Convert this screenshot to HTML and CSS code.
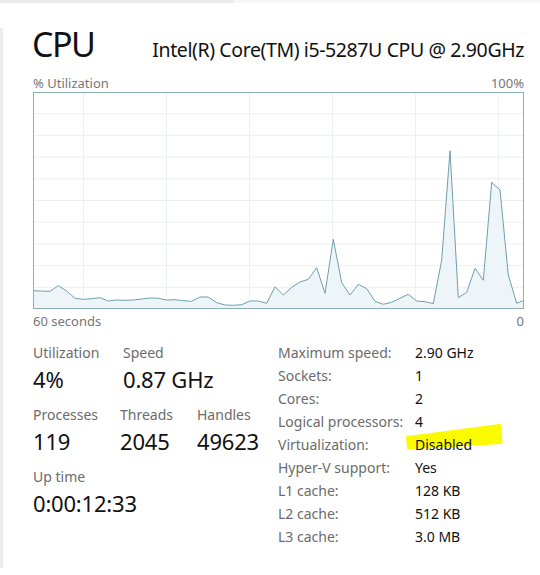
FILE: index.html
```html
<!DOCTYPE html>
<html lang="en">
<head>
    <meta charset="UTF-8">
    <title>CPU</title>
    <link rel="stylesheet" href="styles.css">
</head>
<body>
    <div class="topbar"></div>
    <div class="page">
        <header class="head">
            <h1 class="title">CPU</h1>
            <div class="model">Intel(R) Core(TM) i5-5287U CPU @ 2.90GHz</div>
        </header>

        <div class="axis">
            <span>% Utilization</span>
            <span>100%</span>
        </div>
        <div class="graph">
            <svg width="491" height="217" viewBox="33 92 491 217">
                <g class="grid">
                    <line x1="33" y1="113.7" x2="524" y2="113.7"/>
                    <line x1="33" y1="135.4" x2="524" y2="135.4"/>
                    <line x1="33" y1="157.1" x2="524" y2="157.1"/>
                    <line x1="33" y1="178.8" x2="524" y2="178.8"/>
                    <line x1="33" y1="200.5" x2="524" y2="200.5"/>
                    <line x1="33" y1="222.2" x2="524" y2="222.2"/>
                    <line x1="33" y1="243.9" x2="524" y2="243.9"/>
                    <line x1="33" y1="265.6" x2="524" y2="265.6"/>
                    <line x1="33" y1="287.3" x2="524" y2="287.3"/>
                    <line x1="83.5" y1="92" x2="83.5" y2="309"/>
                    <line x1="166.5" y1="92" x2="166.5" y2="309"/>
                    <line x1="249.5" y1="92" x2="249.5" y2="309"/>
                    <line x1="332.5" y1="92" x2="332.5" y2="309"/>
                    <line x1="415.5" y1="92" x2="415.5" y2="309"/>
                    <line x1="498.5" y1="92" x2="498.5" y2="309"/>
                </g>
                <polygon class="area" points="33.3,290.7 41.6,291 50,291.3 58.3,285.7 66.7,291 75,298.3 83.3,299.3 91.7,298.7 100,297.7 108.3,301 116.7,300 125,300.3 133.3,300 141.7,299 150,298 158.3,298.3 166.7,300 175,299.7 183.3,300.7 191.7,301.3 200,297 208.3,297 216.7,302.7 225,305 233.3,305.3 241.7,304.7 250,301 258.3,301 266.7,303.3 275,286.7 283.3,295 291.7,287.3 300,282 308.3,279.3 316.7,267.7 325,293.3 333.3,239.3 341.7,282.7 350,295 358.3,284.3 366.7,288.7 375,301.3 383.3,304.3 391.7,302.3 400,298.3 408.3,294.3 416.7,301 425,301.7 433.3,303.7 441.7,260 450,150.7 458.3,297.7 466.7,292.3 475,268.3 483.3,280.3 491.7,182.3 500,190 508.3,275 516.7,303.3 524,300.3 524,308.5 33.3,308.5"/>
                <polyline class="line" points="33.3,290.7 41.6,291 50,291.3 58.3,285.7 66.7,291 75,298.3 83.3,299.3 91.7,298.7 100,297.7 108.3,301 116.7,300 125,300.3 133.3,300 141.7,299 150,298 158.3,298.3 166.7,300 175,299.7 183.3,300.7 191.7,301.3 200,297 208.3,297 216.7,302.7 225,305 233.3,305.3 241.7,304.7 250,301 258.3,301 266.7,303.3 275,286.7 283.3,295 291.7,287.3 300,282 308.3,279.3 316.7,267.7 325,293.3 333.3,239.3 341.7,282.7 350,295 358.3,284.3 366.7,288.7 375,301.3 383.3,304.3 391.7,302.3 400,298.3 408.3,294.3 416.7,301 425,301.7 433.3,303.7 441.7,260 450,150.7 458.3,297.7 466.7,292.3 475,268.3 483.3,280.3 491.7,182.3 500,190 508.3,275 516.7,303.3 524,300.3"/>
                <rect class="frame" x="33.5" y="92.5" width="490" height="216"/>
            </svg>
        </div>
        <div class="axis axis-bottom">
            <span>60 seconds</span>
            <span>0</span>
        </div>

        <section class="details">
            <div class="live">
                <div class="stat-row">
                    <div class="stat util">
                        <div class="stat-label">Utilization</div>
                        <div class="stat-value">4%</div>
                    </div>
                    <div class="stat">
                        <div class="stat-label">Speed</div>
                        <div class="stat-value">0.87 GHz</div>
                    </div>
                </div>
                <div class="stat-row">
                    <div class="stat procs">
                        <div class="stat-label">Processes</div>
                        <div class="stat-value">119</div>
                    </div>
                    <div class="stat threads">
                        <div class="stat-label">Threads</div>
                        <div class="stat-value">2045</div>
                    </div>
                    <div class="stat">
                        <div class="stat-label">Handles</div>
                        <div class="stat-value">49623</div>
                    </div>
                </div>
                <div class="stat-row">
                    <div class="stat">
                        <div class="stat-label">Up time</div>
                        <div class="stat-value">0:00:12:33</div>
                    </div>
                </div>
            </div>

            <table class="specs">
                <tr><td>Maximum speed:</td><td>2.90 GHz</td></tr>
                <tr><td>Sockets:</td><td>1</td></tr>
                <tr><td>Cores:</td><td>2</td></tr>
                <tr><td>Logical processors:</td><td>4</td></tr>
                <tr>
                    <td>Virtualization:</td>
                    <td class="marked">
                        <svg class="marker" width="100" height="32" viewBox="0 0 100 32">
                            <path d="M2.5,17.5 L94.5,5.5 L96,22.5 L3.5,28 Z"/>
                        </svg>
                        Disabled
                    </td>
                </tr>
                <tr><td>Hyper-V support:</td><td>Yes</td></tr>
                <tr><td>L1 cache:</td><td>128 KB</td></tr>
                <tr><td>L2 cache:</td><td>512 KB</td></tr>
                <tr><td>L3 cache:</td><td>3.0 MB</td></tr>
            </table>
        </section>
    </div>
</body>
</html>
```

FILE: styles.css
```css
html {
  font-family: "Noto Sans", sans-serif;
}

body {
  margin: 0;
  background-color: #fff;
  color: #111;
}

.topbar {
  height: 3px;
  background: linear-gradient(to right, #ebebeb 233px, #f6f6f6 233px);
}

.page {
  height: 572px;
  box-sizing: border-box;
  padding: 21px 16px 0 32px;
  background: linear-gradient(to right, #ececec 3px, transparent 3px) 0 25px / 100% 540px no-repeat;
}

.head {
  display: flex;
  justify-content: space-between;
  align-items: baseline;
  height: 40px;
}

.title {
  margin: 0;
  font-size: 34px;
  font-weight: normal;
  line-height: 40px;
  letter-spacing: -1.5px;
}

.model {
  font-size: 19.5px;
  letter-spacing: -0.4px;
  line-height: 40px;
}

.axis {
  display: flex;
  justify-content: space-between;
  margin-top: 11px;
  padding-left: 1px;
  font-size: 13px;
  line-height: 16px;
  color: #767676;
}

.axis-bottom {
  margin-top: 4px;
}

.graph {
  margin-top: 1px;
  margin-left: 1px;
  width: 491px;
  height: 217px;
}

.graph svg {
  display: block;
}

.grid line {
  stroke: #ecf0f1;
  stroke-width: 1;
}

.area {
  fill: #edf5f8;
}

.line {
  fill: none;
  stroke: #6f9fae;
  stroke-width: 1;
  stroke-linejoin: round;
}

.frame {
  fill: none;
  stroke: #8db0b5;
  stroke-width: 1;
}

.details {
  display: flex;
  margin-top: 12px;
  padding-left: 1px;
}

.live {
  width: 245px;
  padding-top: 3px;
  display: flex;
  flex-direction: column;
  gap: 10px;
}

.stat-row {
  display: flex;
}

.util {
  width: 90px;
}

.procs {
  width: 87px;
}

.threads {
  width: 77px;
}

.stat-label {
  font-size: 14px;
  line-height: 18px;
  color: #6b6b6b;
}

.stat-value {
  font-size: 22px;
  line-height: 34px;
  letter-spacing: -0.2px;
  color: #111;
}

.specs {
  border-collapse: collapse;
  font-size: 14px;
}

.specs td {
  padding: 0;
  height: 23px;
  line-height: 23px;
  white-space: nowrap;
}

.specs td:first-child {
  width: 137px;
  color: #6b6b6b;
}

.specs td:last-child {
  color: #111;
}

.marked {
  position: relative;
}

.marker {
  position: absolute;
  left: -10px;
  top: -13px;
  z-index: -1;
}

.marker path {
  fill: #fbfb00;
  stroke: #fbfb00;
  stroke-width: 3;
  stroke-linejoin: round;
}
```
